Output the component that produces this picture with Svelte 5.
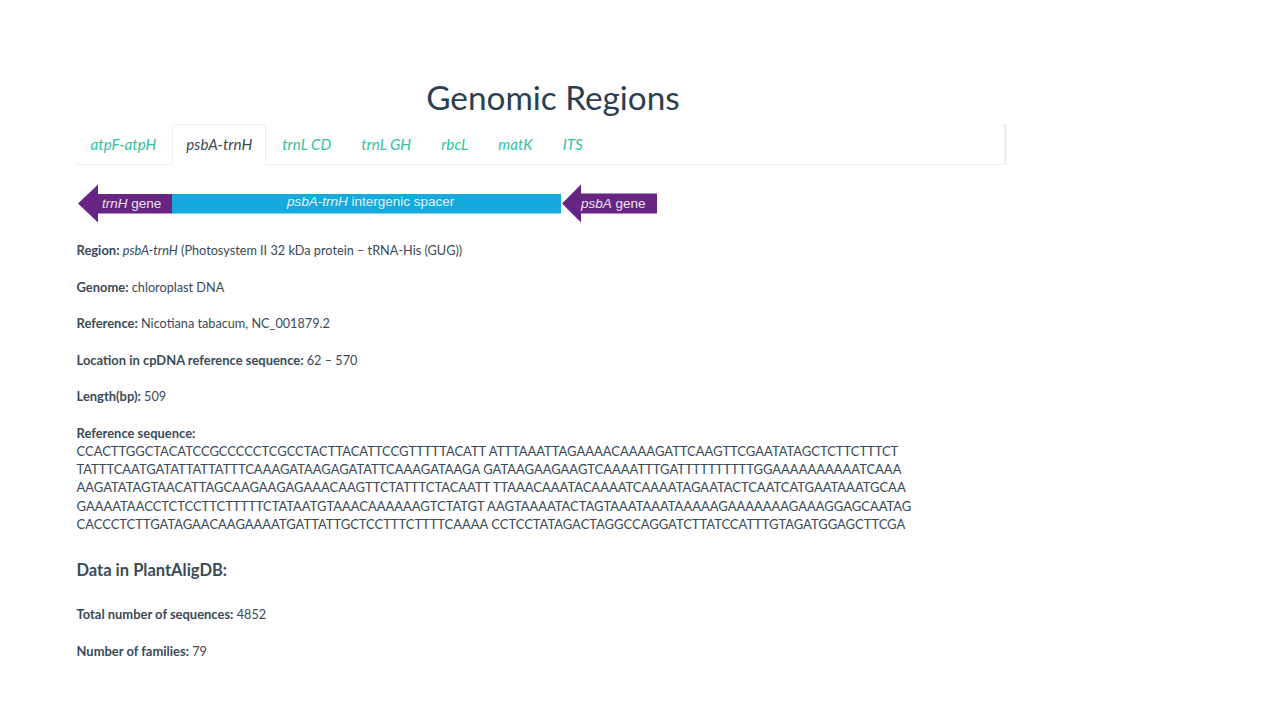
<script>
  const tabs = ['atpF-atpH', 'psbA-trnH', 'trnL CD', 'trnL GH', 'rbcL', 'matK', 'ITS'];
  const active = 'psbA-trnH';
  const seq = [
    'CCACTTGGCTACATCCGCCCCCTCGCCTACTTACATTCCGTTTTTACATT ATTTAAATTAGAAAACAAAAGATTCAAGTTCGAATATAGCTCTTCTTTCT',
    'TATTTCAATGATATTATTATTTCAAAGATAAGAGATATTCAAAGATAAGA GATAAGAAGAAGTCAAAATTTGATTTTTTTTTTGGAAAAAAAAAATCAAA',
    'AAGATATAGTAACATTAGCAAGAAGAGAAACAAGTTCTATTTCTACAATT TTAAACAAATACAAAATCAAAATAGAATACTCAATCATGAATAAATGCAA',
    'GAAAATAACCTCTCCTTCTTTTTCTATAATGTAAACAAAAAAGTCTATGT AAGTAAAATACTAGTAAATAAATAAAAAGAAAAAAAGAAAGGAGCAATAG',
    'CACCCTCTTGATAGAACAAGAAAATGATTATTGCTCCTTTCTTTTCAAAA CCTCCTATAGACTAGGCCAGGATCTTATCCATTTGTAGATGGAGCTTCGA'
  ];
</script>

<main class="page">
  <h1>Genomic Regions</h1>

  <ul class="tabs">
    {#each tabs as t}
      <li class:active={t === active}>{t}</li>
    {/each}
  </ul>

  <svg class="map" width="581" height="40" viewBox="0 0 581 40">
    <rect x="94" y="10" width="390" height="19.5" fill="#15a9dd" />
    <path d="M1 19.5 L21 0.5 V10 H95 V29.5 H21 V38.5 Z" fill="#662483" />
    <path d="M485 19.5 L504 0.5 V9.5 H580 V29.5 H504 V38.5 Z" fill="#662483" />
    <text x="25" y="23.5" class="lbl"><tspan font-style="italic">trnH</tspan> gene</text>
    <text x="210" y="22" class="lbl"><tspan font-style="italic">psbA-trnH</tspan> intergenic spacer</text>
    <text x="504" y="23.5" class="lbl"><tspan font-style="italic">psbA</tspan> gene</text>
  </svg>

  <p><b>Region:</b> <i>psbA-trnH</i> (Photosystem II 32 kDa protein – tRNA-His (GUG))</p>
  <p><b>Genome:</b> chloroplast DNA</p>
  <p><b>Reference:</b> Nicotiana tabacum, NC_001879.2</p>
  <p><b>Location in cpDNA reference sequence:</b> 62 – 570</p>
  <p><b>Length(bp):</b> 509</p>
  <p class="seq"><b>Reference sequence:</b><br />{#each seq as line}{line}<br />{/each}</p>

  <h2>Data in PlantAligDB:</h2>
  <p><b>Total number of sequences:</b> 4852</p>
  <p><b>Number of families:</b> 79</p>
</main>

<style>
  :global(body) {
    margin: 0;
    background: #fff;
  }
  .page {
    box-sizing: border-box;
    width: 1029px;
    padding: 77px 0 0 76.5px;
    font-family: Lato, sans-serif;
    font-size: 12.7px;
    line-height: 18.25px;
    color: #3a4a5a;
  }
  h1 {
    width: 953px;
    margin: 0;
    font-size: 33.3px;
    font-weight: 400;
    line-height: 40px;
    text-align: center;
    color: #2c3e50;
  }
  .tabs {
    display: flex;
    box-sizing: border-box;
    width: 930.5px;
    height: 41px;
    margin: 7px 0 0;
    padding: 0;
    list-style: none;
    gap: 2px;
    border-bottom: 1px solid #ecf0f1;
    border-right: 3px solid #ecf0f1;
  }
  .tabs li {
    box-sizing: border-box;
    height: 41px;
    padding: 0 13px;
    border: 1px solid transparent;
    border-radius: 4px 4px 0 0;
    font-size: 15.2px;
    font-style: italic;
    line-height: 39px;
    color: #35bf9f;
  }
  .tabs li.active {
    border-color: #ecf0f1;
    border-bottom-color: #fff;
    color: #3a4a5a;
  }
  .map {
    display: block;
    margin: 19px 0 17px;
  }
  .lbl {
    font-family: "Liberation Sans", sans-serif;
    font-size: 13.5px;
    fill: #fff;
    opacity: 0.88;
  }
  p {
    margin: 0 0 18.25px;
  }
  b {
    font-size: 12.95px;
    font-weight: 700;
    line-height: 1;
  }
  .seq {
    white-space: nowrap;
    font-size: 12.98px;
  }
  h2 {
    margin: 27px 0 25px;
    font-size: 16.5px;
    font-weight: 700;
    line-height: 20px;
  }
</style>
